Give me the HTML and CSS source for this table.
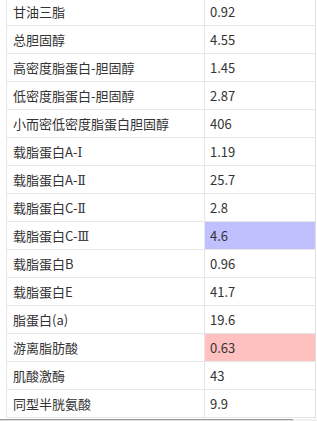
FILE: index.html
```html
<!DOCTYPE html>
<html>
<head>
<meta charset="utf-8">
<link rel="stylesheet" href="styles.css">
</head>
<body>
<div class="wrap">
<table class="grid">
<tr><td class="name">甘油三脂</td><td class="val">0.92</td></tr>
<tr><td class="name">总胆固醇</td><td class="val">4.55</td></tr>
<tr><td class="name">高密度脂蛋白-胆固醇</td><td class="val">1.45</td></tr>
<tr><td class="name">低密度脂蛋白-胆固醇</td><td class="val">2.87</td></tr>
<tr><td class="name">小而密低密度脂蛋白胆固醇</td><td class="val">406</td></tr>
<tr><td class="name">载脂蛋白A-<span class="roman">Ⅰ</span></td><td class="val">1.19</td></tr>
<tr><td class="name">载脂蛋白A-<span class="roman">Ⅱ</span></td><td class="val">25.7</td></tr>
<tr><td class="name">载脂蛋白C-<span class="roman">Ⅱ</span></td><td class="val">2.8</td></tr>
<tr><td class="name">载脂蛋白C-<span class="roman">Ⅲ</span></td><td class="val low">4.6</td></tr>
<tr><td class="name">载脂蛋白B</td><td class="val">0.96</td></tr>
<tr><td class="name">载脂蛋白E</td><td class="val">41.7</td></tr>
<tr><td class="name">脂蛋白(a)</td><td class="val">19.6</td></tr>
<tr><td class="name">游离脂肪酸</td><td class="val high">0.63</td></tr>
<tr><td class="name">肌酸激酶</td><td class="val">43</td></tr>
<tr><td class="name">同型半胱氨酸</td><td class="val">9.9</td></tr>
</table>
<div class="hscroll"><div class="thumb"></div></div>
</div>
</body>
</html>
```

FILE: styles.css
```css
html, body {
  margin: 0;
  padding: 0;
  background: #fff;
  overflow: hidden;
}
.wrap {
  width: 317px;
  height: 421px;
  overflow: hidden;
  display: flex;
  flex-direction: column;
}
.grid {
  margin: -3px 0 0 6px;
  border-collapse: collapse;
  width: 310px;
  font-family: "Noto Sans CJK SC", "Microsoft YaHei", sans-serif;
  font-size: 13px;
  color: #333;
  table-layout: fixed;
}
.grid td {
  border: 1px solid #e6e6e6;
  height: 27px;
  padding: 0 0 0 6px;
  box-sizing: border-box;
  white-space: nowrap;
  overflow: hidden;
  line-height: 27px;
  vertical-align: middle;
}
.grid td.name {
  width: 198px;
}
.grid td.val {
  padding-left: 5px;
  border-right-color: #e0e0e0;
}
.grid td.low {
  background: #c0c0ff;
}
.grid td.high {
  background: #ffc0c0;
}
.roman {
  font-family: "DejaVu Serif", "Liberation Serif", serif;
  font-size: 12px;
  line-height: 1;
}
.hscroll {
  margin-top: 1px;
  height: 3px;
  background: #f0f0f0;
  display: flex;
}
.thumb {
  width: 293px;
  border-top: 1px solid #9a9a9a;
  background: #dcdcdc;
}
```
